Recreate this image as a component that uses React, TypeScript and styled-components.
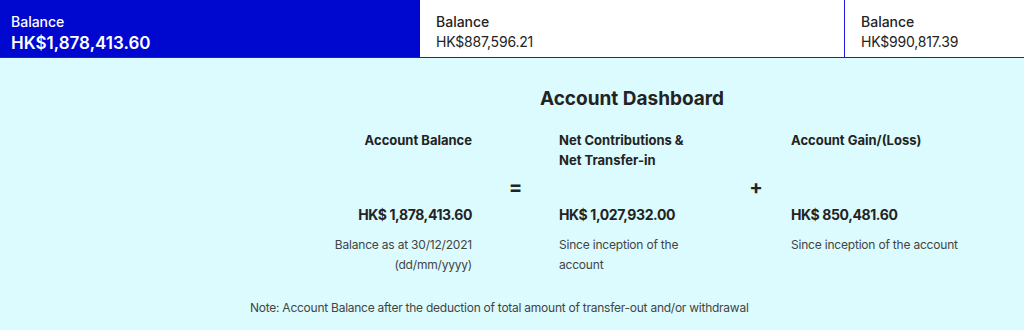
import React from "react";
import styled, { createGlobalStyle } from "styled-components";

const GlobalStyle = createGlobalStyle`
  html, body { margin: 0; padding: 0; background: #dcfbfe; }
  body { font-family: Inter, "Noto Sans", Roboto, sans-serif; color: #232323; }
`;

const Page = styled.div`
  width: 1024px;
  height: 330px;
  background: #dcfbfe;
  overflow: hidden;
`;

const TabBar = styled.div`
  display: grid;
  grid-template-columns: 420px 425px 1fr;
  height: 58px;
  background: #ffffff;
`;

const Tab = styled.div<{ $active?: boolean; $last?: boolean; $pad: number }>`
  display: flex;
  flex-direction: column;
  justify-content: flex-start;
  padding: 12px 0 0 ${(p) => p.$pad}px;
  box-sizing: border-box;
  background: ${(p) => (p.$active ? "#0008cf" : "#ffffff")};
  color: ${(p) => (p.$active ? "#ffffff" : "#232323")};
  border-bottom: 1px solid #1a1ae0;
  border-right: ${(p) => (p.$active || p.$last ? "none" : "1px solid #1a1ae0")};
`;

const TabLabel = styled.div`
  font-size: 14px;
  line-height: 20px;
  font-weight: 500;
`;

const TabAmount = styled.div<{ $active?: boolean }>`
  font-size: ${(p) => (p.$active ? "17px" : "14px")};
  line-height: ${(p) => (p.$active ? "22px" : "20px")};
  font-weight: ${(p) => (p.$active ? 600 : 400)};
  letter-spacing: ${(p) => (p.$active ? "0" : "-0.2px")};
`;

const Content = styled.div`
  margin-left: 240px;
  width: 784px;
  padding-top: 29px;
  box-sizing: border-box;
`;

const Title = styled.h1`
  margin: 0;
  text-align: center;
  font-size: 19px;
  line-height: 24px;
  font-weight: 700;
  color: #232323;
`;

const Grid = styled.div`
  display: grid;
  grid-template-columns: 72px 160px 87px 162px 70px 1fr;
  grid-template-rows: 40px 34px 20px auto;
  margin-top: 19px;
`;

const Cell = styled.div<{ $col: number; $row: number; $right?: boolean; $narrow?: boolean }>`
  grid-column: ${(p) => p.$col};
  grid-row: ${(p) => p.$row};
  text-align: ${(p) => (p.$right ? "right" : "left")};
  max-width: ${(p) => (p.$narrow ? "145px" : "none")};
`;

const Heading = styled(Cell)`
  font-size: 13px;
  line-height: 20px;
  font-weight: 700;
`;

const Operator = styled(Cell)`
  display: flex;
  align-items: center;
  justify-content: center;
  font-size: 20px;
  font-weight: 700;
  line-height: 20px;
`;

const Amount = styled(Cell)`
  margin-top: 1px;
  font-size: 14px;
  line-height: 20px;
  font-weight: 700;
  letter-spacing: -0.4px;
`;

const Desc = styled(Cell)`
  margin-top: 11px;
  font-size: 12px;
  line-height: 20px;
  color: #444444;
  letter-spacing: -0.2px;
`;

const Note = styled.div`
  margin-top: 23px;
  padding-left: 10px;
  font-size: 12px;
  line-height: 20px;
  color: #444444;
  letter-spacing: -0.25px;
`;

const tabs = [
  { label: "Balance", amount: "HK$1,878,413.60", active: true, pad: 11 },
  { label: "Balance", amount: "HK$887,596.21", active: false, pad: 16 },
  { label: "Balance", amount: "HK$990,817.39", active: false, pad: 16 },
];

export default function App() {
  return (
    <Page>
      <GlobalStyle />
      <TabBar>
        {tabs.map((t, i) => (
          <Tab key={i} $active={t.active} $last={i === tabs.length - 1} $pad={t.pad}>
            <TabLabel>{t.label}</TabLabel>
            <TabAmount $active={t.active}>{t.amount}</TabAmount>
          </Tab>
        ))}
      </TabBar>
      <Content>
        <Title>Account Dashboard</Title>
        <Grid>
          <Heading $col={2} $row={1} $right>Account Balance</Heading>
          <Heading $col={4} $row={1} $narrow>Net Contributions &amp; Net Transfer-in</Heading>
          <Heading $col={6} $row={1}>Account Gain/(Loss)</Heading>

          <Operator $col={3} $row={2}>=</Operator>
          <Operator $col={5} $row={2}>+</Operator>

          <Amount $col={2} $row={3} $right>HK$ 1,878,413.60</Amount>
          <Amount $col={4} $row={3}>HK$ 1,027,932.00</Amount>
          <Amount $col={6} $row={3}>HK$ 850,481.60</Amount>

          <Desc $col={2} $row={4} $right>Balance as at 30/12/2021 (dd/mm/yyyy)</Desc>
          <Desc $col={4} $row={4} $narrow>Since inception of the account</Desc>
          <Desc $col={6} $row={4}>Since inception of the account</Desc>
        </Grid>
        <Note>Note: Account Balance after the deduction of total amount of transfer-out and/or withdrawal</Note>
      </Content>
    </Page>
  );
}
